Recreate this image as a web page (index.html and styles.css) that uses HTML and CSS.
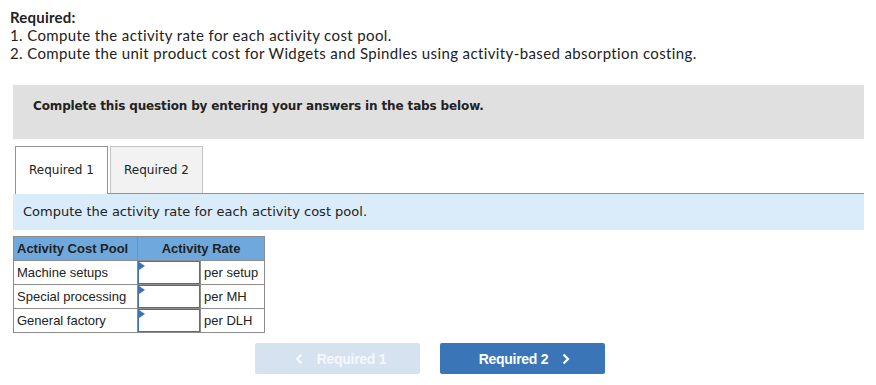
FILE: index.html
```html
<!DOCTYPE html>
<html>
<head>
    <title>Required</title>
    <link rel="stylesheet" href="styles.css">
</head>
<body>
    <div class="intro">
        <div class="intro-title">Required:</div>
        <div>1. Compute the activity rate for each activity cost pool.</div>
        <div>2. Compute the unit product cost for Widgets and Spindles using activity-based absorption costing.</div>
    </div>

    <div class="notice">Complete this question by entering your answers in the tabs below.</div>

    <div class="tabs">
        <div class="tab active">Required 1</div>
        <div class="tab">Required 2</div>
    </div>

    <div class="instruction">Compute the activity rate for each activity cost pool.</div>

    <table class="rates">
        <tr>
            <th class="col-pool">Activity Cost Pool</th>
            <th colspan="2">Activity Rate</th>
        </tr>
        <tr>
            <td>Machine setups</td>
            <td class="cell-input"><input type="text"></td>
            <td class="col-unit">per setup</td>
        </tr>
        <tr>
            <td>Special processing</td>
            <td class="cell-input"><input type="text"></td>
            <td class="col-unit">per MH</td>
        </tr>
        <tr>
            <td>General factory</td>
            <td class="cell-input"><input type="text"></td>
            <td class="col-unit">per DLH</td>
        </tr>
    </table>

    <div class="nav">
        <button class="nav-button nav-prev" disabled>
            <svg class="chev" width="8" height="12" viewBox="0 0 8 12"><path d="M6.5 1.5 L2 6 L6.5 10.5" fill="none" stroke="currentColor" stroke-width="2.2"/></svg>
            Required 1
        </button>
        <button class="nav-button nav-next">
            Required 2
            <svg class="chev" width="8" height="12" viewBox="0 0 8 12"><path d="M1.5 1.5 L6 6 L1.5 10.5" fill="none" stroke="currentColor" stroke-width="2.2"/></svg>
        </button>
    </div>
</body>
</html>
```

FILE: styles.css
```css
body {
    margin: 0;
    padding: 0;
    background-color: #ffffff;
    color: #1a1a1a;
}

.intro {
    font-family: Lato, "Open Sans", sans-serif;
    font-size: 15px;
    line-height: 18px;
    letter-spacing: 0.38px;
    padding: 8px 10px 0;
    color: #222;
}

.intro-title {
    font-weight: bold;
    letter-spacing: 0.2px;
}

.notice {
    margin: 23px 12px 0 13px;
    height: 54px;
    box-sizing: border-box;
    padding: 14px 20px;
    background-color: #e0e0e0;
    font-family: "DejaVu Sans", Verdana, sans-serif;
    font-size: 12px;
    font-weight: bold;
    letter-spacing: -0.14px;
    color: #222;
}

.tabs {
    display: flex;
    gap: 2px;
    margin: 7px 12px 0 15px;
    border-bottom: 1px solid #939393;
}

.tab {
    width: 91px;
    height: 46px;
    line-height: 46px;
    text-align: center;
    font-family: "DejaVu Sans", Verdana, sans-serif;
    font-size: 12px;
    color: #222;
    background-color: #f2f2f2;
    border: 1px solid #c4c4c4;
    border-bottom: none;
}

.tab.active {
    background-color: #ffffff;
    border-color: #939393;
    margin-bottom: -1px;
    height: 47px;
}

.instruction {
    margin: 0 12px 0 13px;
    height: 36px;
    line-height: 36px;
    padding-left: 10px;
    background-color: #daebf9;
    font-family: "DejaVu Sans", Verdana, sans-serif;
    font-size: 13px;
    color: #222;
}

.rates {
    margin: 6px 0 0 13px;
    border-collapse: collapse;
    font-family: "Liberation Sans", Arial, sans-serif;
    font-size: 13px;
    color: #222;
}

.rates th,
.rates td {
    border: 1px solid #8c8c8c;
    height: 23px;
    padding: 0 3px;
    text-align: left;
    white-space: nowrap;
}

.rates th {
    background-color: #6fa8dc;
    font-weight: bold;
    text-align: center;
}

.rates th.col-pool {
    text-align: left;
    width: 117px;
}

.rates td.col-unit {
    width: 57px;
}

.rates td.cell-input {
    position: relative;
    padding: 0;
    width: 62px;
}

.cell-input input {
    display: block;
    box-sizing: border-box;
    width: 62px;
    height: 23px;
    margin: 0;
    border: 1px solid #3d73b6;
    outline: none;
}

.cell-input::before {
    content: "";
    position: absolute;
    left: 1px;
    top: 1px;
    border-top: 4px solid transparent;
    border-bottom: 4px solid transparent;
    border-left: 6px solid #3d73b6;
}

.nav {
    display: flex;
    gap: 20px;
    margin: 10px 0 0 255px;
}

.nav-button {
    display: flex;
    align-items: center;
    justify-content: center;
    gap: 14px;
    width: 165px;
    height: 31px;
    border: none;
    border-radius: 2px;
    font-family: "Liberation Sans", Arial, sans-serif;
    font-size: 14px;
    font-weight: bold;
    letter-spacing: -0.3px;
    color: #ffffff;
    background-color: #3a75b8;
    cursor: pointer;
}

.nav-prev {
    background-color: #d6e2f0;
    color: #f5f8fc;
    padding-left: 6px;
    padding-right: 0;
}

.nav-next {
    padding-left: 4px;
    padding-right: 0;
}
```
